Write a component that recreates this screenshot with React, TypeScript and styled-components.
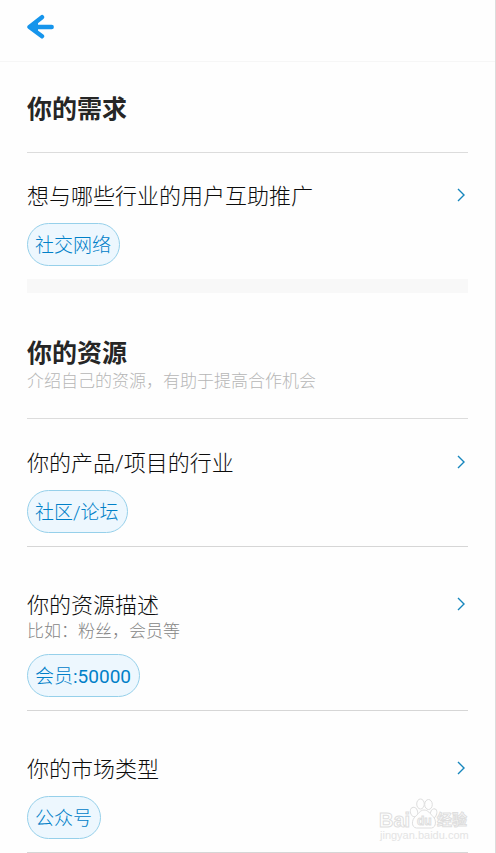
import React from "react";
import styled, { createGlobalStyle } from "styled-components";

const GlobalStyle = createGlobalStyle`
  *, *::before, *::after { box-sizing: border-box; }
  body {
    margin: 0;
    background: #fefefe;
    color: #262626;
    font-family: Roboto, "Noto Sans CJK SC", sans-serif;
  }
  button { font: inherit; color: inherit; }
`;

const Page = styled.div`
  position: relative;
  min-height: 100vh;
  border-right: 1px solid #dcdcdc;
`;

const TopBar = styled.header`
  display: flex;
  align-items: flex-start;
  height: 62px;
  padding: 14px 27px;
  border-bottom: 1px solid #f6f6f6;
`;

const BackButton = styled.button`
  display: flex;
  padding: 0;
  border: 0;
  background: none;
  cursor: pointer;
`;

const Content = styled.main`
  padding: 0 27px;
`;

const SectionHead = styled.div<{ $spaced?: boolean }>`
  padding: ${(p) => (p.$spaced ? 43 : 30)}px 0 24px;
  border-bottom: 1px solid #dcdcdc;
`;

const SectionTitle = styled.h2`
  margin: 0;
  font-size: 25px;
  line-height: 36px;
  font-weight: 700;
`;

const Hint = styled.p<{ $faint?: boolean }>`
  margin: 0;
  padding-bottom: 4px;
  font-size: 17px;
  line-height: 18px;
  font-weight: 300;
  color: ${(p) => (p.$faint ? "#b6b6b6" : "#868686")};
`;

const rowTop = { compact: 28, first: 29, normal: 43 };

const Row = styled.div<{ $kind: keyof typeof rowTop }>`
  padding: ${(p) => rowTop[p.$kind]}px 0 13px;
  border-bottom: ${(p) => (p.$kind === "compact" ? "0" : "1px solid #d6d6d6")};
`;

const RowButton = styled.button`
  display: flex;
  align-items: center;
  justify-content: space-between;
  width: 100%;
  padding: 0 2px 0 0;
  border: 0;
  background: none;
  color: #0c0c0c;
  font-size: 22px;
  line-height: 32px;
  font-weight: 300;
  text-align: left;
  cursor: pointer;
`;

const Tags = styled.div`
  display: flex;
  flex-wrap: wrap;
  gap: 8px;
  margin-top: 10px;
`;

const Tag = styled.span`
  padding: 2px 8px 0 7px;
  border: 1px solid #96d0ea;
  border-radius: 22px;
  background: #edf7fe;
  color: #0080c8;
  font-size: 19px;
  line-height: 39px;
  font-weight: 300;
`;

const Latin = styled.span`
  font-weight: 400;
`;

const Band = styled.div`
  height: 14px;
  background: #f8f8f8;
`;

const Watermark = styled.svg`
  position: absolute;
  right: 26px;
  bottom: 9px;
  pointer-events: none;
`;

const BackIcon = () => (
  <svg width="28" height="26" viewBox="0 0 28 26" fill="none" stroke="#1695ec" strokeWidth="4.400" strokeLinecap="round" strokeLinejoin="round" aria-hidden="true">
    <path d="M15 3.200 2.500 13 15 22.300M3.500 13H24.700" />
    <path d="M1.500 13 11 6.500V19.500Z" fill="#1695ec" stroke="none" />
  </svg>
);

const Chevron = () => (
  <svg width="10" height="18" viewBox="0 0 10 18" fill="none" stroke="#1686bd" strokeWidth="1.4" aria-hidden="true">
    <path d="M2 1 8 7 2 13" />
  </svg>
);

type FieldProps = {
  title: string;
  hint?: string;
  kind?: keyof typeof rowTop;
  children: React.ReactNode;
};

const Field = ({ title, hint, kind = "normal", children }: FieldProps) => (
  <Row $kind={kind}>
    <RowButton type="button">
      {title}
      <Chevron />
    </RowButton>
    {hint && <Hint>{hint}</Hint>}
    <Tags>
      <Tag>{children}</Tag>
    </Tags>
  </Row>
);

const BrandMark = () => (
  <Watermark width="94" height="46" viewBox="0 0 94 46" fill="#fefefe" stroke="#dedede" strokeWidth="1" aria-label="Baidu 经验">
    <ellipse cx="39" cy="14" rx="3.600" ry="4.800" transform="rotate(-18 39 14)" />
    <ellipse cx="45.500" cy="6" rx="3.800" ry="5" />
    <ellipse cx="53.500" cy="6.500" rx="3.800" ry="5" />
    <ellipse cx="58.500" cy="15.500" rx="3.200" ry="4.800" transform="rotate(18 58.500 15.500)" />
    <path d="M49 12c-4 0-5.500 4-8.500 6.500-4 3-4.500 11 1 11.500h15c5-.5 5-8.500 1.500-11.500-3-3-5-6.500-9-6.500Z" />
    <g fontFamily='"Liberation Sans", "Noto Sans CJK SC", sans-serif' fontWeight="700">
      <text x="4" y="29" fontSize="20">Bai</text>
      <text x="42" y="27" fontSize="12">du</text>
      <text x="62" y="27" fontSize="15">经验</text>
      <text x="5" y="41" fontSize="11" fontWeight="400" fill="#e4e4e4" stroke="none">jingyan.baidu.com</text>
    </g>
  </Watermark>
);

export default function App() {
  return (
    <Page>
      <GlobalStyle />
      <TopBar>
        <BackButton type="button" aria-label="返回">
          <BackIcon />
        </BackButton>
      </TopBar>
      <Content>
        <section>
          <SectionHead>
            <SectionTitle>你的需求</SectionTitle>
          </SectionHead>
          <Field title="想与哪些行业的用户互助推广" kind="compact">社交网络</Field>
          <Band />
        </section>
        <section>
          <SectionHead $spaced>
            <SectionTitle>你的资源</SectionTitle>
            <Hint $faint>介绍自己的资源，有助于提高合作机会</Hint>
          </SectionHead>
          <Field title="你的产品/项目的行业" kind="first">社区/论坛</Field>
          <Field title="你的资源描述" hint="比如：粉丝，会员等">
            会员<Latin>:50000</Latin>
          </Field>
          <Field title="你的市场类型">公众号</Field>
        </section>
      </Content>
      <BrandMark />
    </Page>
  );
}
